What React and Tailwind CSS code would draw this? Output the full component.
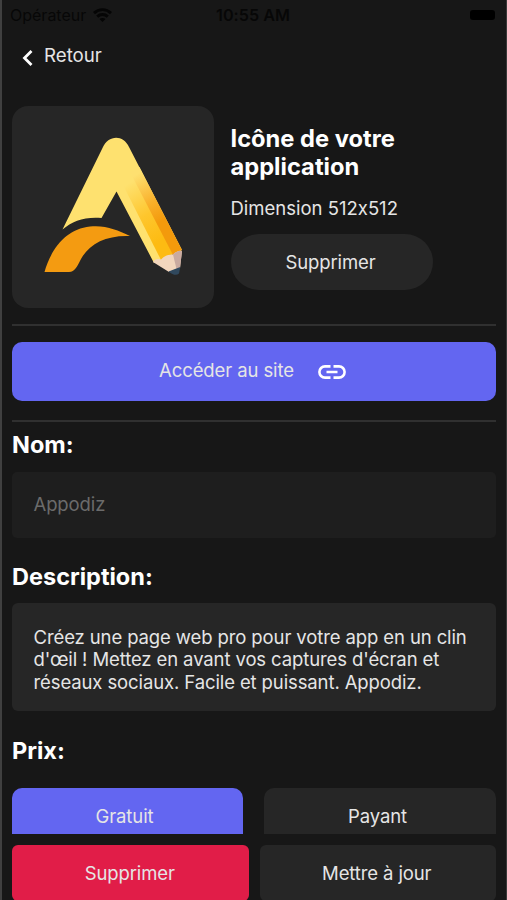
import React from 'react';

function WifiIcon() {
  return (
    <svg className="ml-[7px] h-[14px] w-[19px]" viewBox="0 0 19 14" fill="none" stroke="#050505" strokeWidth="2.9">
      <path d="M1 5.1C5.8.5 13.2.5 18 5.1" />
      <path d="M4.200 8.600c3-2.800 7.600-2.800 10.600 0" />
      <path d="M6.500 11c1.600-1.500 4.400-1.500 6 0L9.500 14z" fill="#050505" stroke="none" />
    </svg>
  );
}

function PencilLogo() {
  return (
    <svg className="h-[202px] w-[202px]" viewBox="12 106 202 202">
      <defs>
        <linearGradient id="mid" gradientUnits="userSpaceOnUse" x1="128" y1="184" x2="162" y2="240">
          <stop offset="0" stopColor="#fee16f" />
          <stop offset=".55" stopColor="#fec62d" />
          <stop offset="1" stopColor="#fdbb12" />
        </linearGradient>
        <linearGradient id="edge" gradientUnits="userSpaceOnUse" x1="134" y1="176" x2="160" y2="222">
          <stop offset="0" stopColor="#fee070" />
          <stop offset=".6" stopColor="#f9b02a" />
          <stop offset="1" stopColor="#f39a0c" />
        </linearGradient>
      </defs>
      <path d="M62.500 229.500L102.500 148C108 135 123 134 129 147L182 250L154 263L116.500 191.500L101.500 218C85 216.500 72.500 221 62.500 229.500Z" fill="#fee16f" />
      <path d="M122 183L137 176L173 254L161 260Z" fill="url(#mid)" />
      <path d="M130 172L139.500 167L182 250L173 255Z" fill="url(#edge)" />
      <path d="M44.500 272C51 249 66 229 90 226.500C106 225 117 230 130 236C106 235 89 244 81 259C77 267 75 271.500 69 272Z" fill="#f49b11" />
      <path d="M153 262Q155 258 161 259.500Q166 254 173 254.500Q178 250 182 251L180 268L169 272Z" fill="#f2d6bd" />
      <path d="M173 254.500Q178 250 182 251L180 268L176.500 269Z" fill="#c9aaa0" />
      <path d="M168.500 271.500L180.300 267L179 273.500Q175.500 277 168.500 271.500Z" fill="#30485d" />
    </svg>
  );
}

function Divider() {
  return <div className="h-[2px] w-full shrink-0 bg-[#303030]" />;
}

function Heading({ children }) {
  return <h2 className="text-[23.500px] leading-[30px] font-bold tracking-normal text-white">{children}</h2>;
}

export default function App() {
  return (
    <div className="flex h-[900px] w-[507px] flex-col overflow-hidden border-r border-l-2 border-r-[#3a3a3a] border-l-[#404040] bg-[#171717] pr-[10px] pl-[10px] font-['Inter','Liberation_Sans',sans-serif] text-[18.500px] tracking-[-0.11px] text-[#e5e5e5] [font-feature-settings:'calt'_0]">
      <header className="grid h-[30px] shrink-0 grid-cols-[1fr_auto_1fr] items-center text-[16px] leading-5 tracking-normal text-[#070707]">
        <div className="-ml-[2px] flex items-center">
          <span>Opérateur</span>
          <WifiIcon />
        </div>
        <span className="-ml-px pr-px text-[16.200px] font-semibold">10:55 AM</span>
        <span className="mr-[1px] h-[10px] w-[25px] justify-self-end rounded-[3px] bg-black" />
      </header>

      <nav className="flex h-[52px] shrink-0 items-center pl-[10px]">
        <svg className="mt-[3px] h-[16px] w-[11px]" viewBox="0 0 11 16" fill="none" stroke="#fff" strokeWidth="2.8">
          <path d="M9.500 1L2.500 8l7 7" />
        </svg>
        <span className="ml-[11px] text-[18.700px] tracking-normal">Retour</span>
      </nav>

      <main className="flex h-[752px] shrink-0 flex-col overflow-hidden pt-[24px]">
        <section className="flex h-[202px] shrink-0 gap-[16.500px]">
          <div className="h-[202px] w-[202px] shrink-0 rounded-[16px] bg-[#262626]">
            <PencilLogo />
          </div>
          <div className="flex flex-col pt-[19px]">
            <h1 className="w-[220px] text-[23.700px] leading-[28px] font-bold tracking-normal text-white">Icône de votre application</h1>
            <p className="mt-[15px] leading-[24px] tracking-normal">Dimension 512x512</p>
            <button className="mt-[14px] h-[56px] w-[202px] rounded-full bg-[#262626] pt-px pr-[2px]">Supprimer</button>
          </div>
        </section>

        <div className="mt-[16px]"><Divider /></div>
        <button className="mt-[16px] flex h-[59px] w-full shrink-0 items-center justify-center gap-[24px] rounded-[10px] bg-[#6366f1] pr-[3px] pb-[2px]">
          <span>Accéder au site</span>
          <svg className="mt-[3px] h-[14px] w-[28px]" viewBox="0 0 28 14" fill="none" stroke="#fff" strokeWidth="2.6">
            <path d="M12.500 1.400H7a5.600 5.600 0 0 0 0 11.200h5.500M15.500 1.400H21a5.600 5.600 0 0 1 0 11.200h-5.500M8.500 7h11" />
          </svg>
        </button>
        <div className="mt-[19px]"><Divider /></div>

        <section className="mt-[8px] shrink-0">
          <Heading>Nom:</Heading>
          <div className="mt-[12px] flex h-[66px] items-center rounded-[5px] bg-[#1e1e1e] px-[21.500px] text-[#6b6b6b]">Appodiz</div>
        </section>
        <section className="mt-[24px] shrink-0">
          <Heading>Description:</Heading>
          <p className="mt-[11px] h-[108px] rounded-[6px] bg-[#262626] px-[21.500px] pt-[22.500px] leading-[22.800px] whitespace-nowrap">
            Créez une page web pro pour votre app en un clin<br />
            d'œil ! Mettez en avant vos captures d'écran et<br />
            réseaux sociaux. Facile et puissant. Appodiz.
          </p>
        </section>
        <section className="mt-[25px] shrink-0">
          <Heading>Prix:</Heading>
          <div className="mt-[22px] grid grid-cols-[231px_232px] gap-[21px]">
            <button className="h-[56px] rounded-[10px] bg-[#6366f1] pt-px pr-[6px]">Gratuit</button>
            <button className="h-[56px] rounded-[10px] bg-[#262626] pt-px pr-[5px]">Payant</button>
          </div>
        </section>
      </main>

      <footer className="mt-[11px] grid shrink-0 grid-cols-2 gap-[11px]">
        <button className="h-[56px] rounded-[6px] bg-[#e11d48] pt-px pr-px">Supprimer</button>
        <button className="h-[56px] rounded-[6px] bg-[#262626] pt-px pr-[2px]">Mettre à jour</button>
      </footer>
    </div>
  );
}
